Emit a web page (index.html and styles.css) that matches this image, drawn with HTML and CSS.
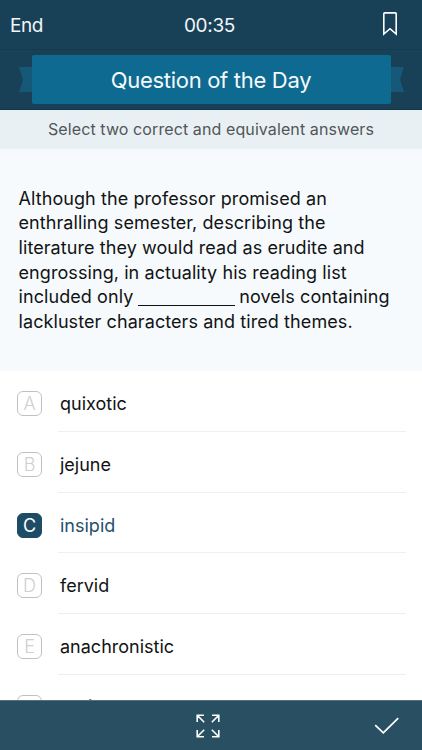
FILE: index.html
```html
<!DOCTYPE html>
<html lang="en">
<head>
<meta charset="utf-8">
<title>Question of the Day</title>
<link rel="stylesheet" href="styles.css">
</head>
<body>
<div class="app">
  <header class="navbar">
    <span class="end">End</span>
    <span class="timer">00:35</span>
    <svg class="bookmark" width="14" height="24" viewBox="0 0 14 24"><path d="M1.7 .9H12.3Q13.2 .9 13.2 1.8V22L7 16.7L.8 22V1.8Q.8 .9 1.7 .9Z"/></svg>
  </header>
  <div class="banner">
    <svg class="tail" width="13" height="25" viewBox="0 0 13 25"><path d="M0 0H13V25H0L4 12.5Z"/></svg>
    <h1 class="title"><span>Question of the Day</span></h1>
    <svg class="tail" width="13" height="25" viewBox="0 0 13 25"><path d="M13 0H0V25H13L9 12.5Z"/></svg>
  </div>
  <p class="hint"><span>Select two correct and equivalent answers</span></p>
  <section class="question">
    <p>Although the professor promised an<br>enthralling semester, describing the<br>literature they would read as erudite and<br>engrossing, in actuality his reading list<br>included only <span class="blank"></span> novels containing<br>lackluster characters and tired themes.</p>
  </section>
  <ul class="answers">
    <li class="answer"><span class="key">A</span><span class="word"><span>quixotic</span></span></li>
    <li class="answer"><span class="key">B</span><span class="word"><span>jejune</span></span></li>
    <li class="answer selected"><span class="key">C</span><span class="word"><span>insipid</span></span></li>
    <li class="answer"><span class="key">D</span><span class="word"><span>fervid</span></span></li>
    <li class="answer"><span class="key">E</span><span class="word"><span>anachronistic</span></span></li>
    <li class="answer"><span class="key">F</span><span class="word"><span>eerie</span></span></li>
  </ul>
  <footer class="toolbar">
    <svg class="expand" width="24" height="24" viewBox="0 0 24 24"><path d="M1.2 8V1.2H8M1.2 1.2L8.2 8.2M16 1.2H22.8V8M22.8 1.2L15.8 8.2M1.2 16V22.8H8M1.2 22.8L8.2 15.8M16 22.8H22.8V16M22.8 22.8L15.8 15.8"/></svg>
    <svg class="check" width="26" height="18" viewBox="0 0 26 18"><path d="M1.2 8.2L9.3 15.8L24.2 1.2"/></svg>
  </footer>
</div>
</body>
</html>
```
FILE: styles.css
```css
* { box-sizing: border-box; }
body { margin: 0; background: #fff; color: #111314; font-family: Inter, "Liberation Sans", sans-serif; }
svg { display: block; fill: none; flex: none; }
.app { width: 422px; height: 750px; overflow: hidden; display: flex; flex-direction: column; }
.navbar { height: 50px; flex: none; display: grid; grid-template-columns: 1fr auto 1fr; align-items: center; padding: 1px 25px 0 10px; background: #184158; border-bottom: 1px solid #133a4f; color: #f0f5f7; font-size: 19px; }
.end { letter-spacing: -.5px; }
.timer { letter-spacing: -.3px; transform: translateX(6px); }
.bookmark { justify-self: end; margin-top: -2px; stroke: #fff; stroke-width: 1.6; }
.banner { height: 60px; flex: none; display: flex; align-items: center; justify-content: center; background: #184158; border-bottom: 1px solid #123448; }
.tail path { fill: #155878; }
.title { width: 359px; height: 49px; margin: 0; border-radius: 2px; background: #0f6a91; color: #f4fafc; font-size: 22px; font-weight: 400; line-height: 50px; text-align: center; letter-spacing: -.3px; }
.hint { height: 39px; flex: none; margin: 0; background: #e9f0f3; color: #505659; font-size: 16px; line-height: 38px; text-align: center; letter-spacing: .1px; }
.question { height: 222px; flex: none; padding: 37.5px 18px 0 18.5px; background: #f6fafc; }
.question p { margin: 0; font-size: 18px; line-height: 24.7px; letter-spacing: .08px; white-space: nowrap; }
.blank { display: inline-block; width: 97px; height: 1px; margin: 0 -.5px 0 -1px; background: #111314; vertical-align: -3px; }
.answers { flex: 1; min-height: 0; overflow: hidden; margin: 0; padding: 0; list-style: none; }
.answer { height: 60.75px; display: flex; padding: 0 16px 0 17px; }
.key { width: 25px; height: 25px; margin-top: 20px; border: 1px solid #bfc2c3; border-radius: 6px; color: #ced0d1; font-size: 18px; font-weight: 300; line-height: 23px; text-align: center; }
.word { flex: 1; margin-left: 16px; padding-left: 2px; border-bottom: 1px solid #eeefef; font-size: 18px; line-height: 66px; }
.answer:last-child .word { line-height: 64px; }
.selected .key { background: #1d4c66; border-color: #1d4c66; color: #fff; font-weight: 400; }
.selected .word { color: #1f506a; }
.toolbar { height: 50px; flex: none; display: grid; grid-template-columns: 1fr auto 1fr; align-items: center; padding: 0 22px 0 16px; background: #294f62; border-top: 1px solid #537180; }
.expand { grid-column: 2; stroke: #fff; stroke-width: 1.6; }
.check { justify-self: end; stroke: #fff; stroke-width: 1.8; }
```
